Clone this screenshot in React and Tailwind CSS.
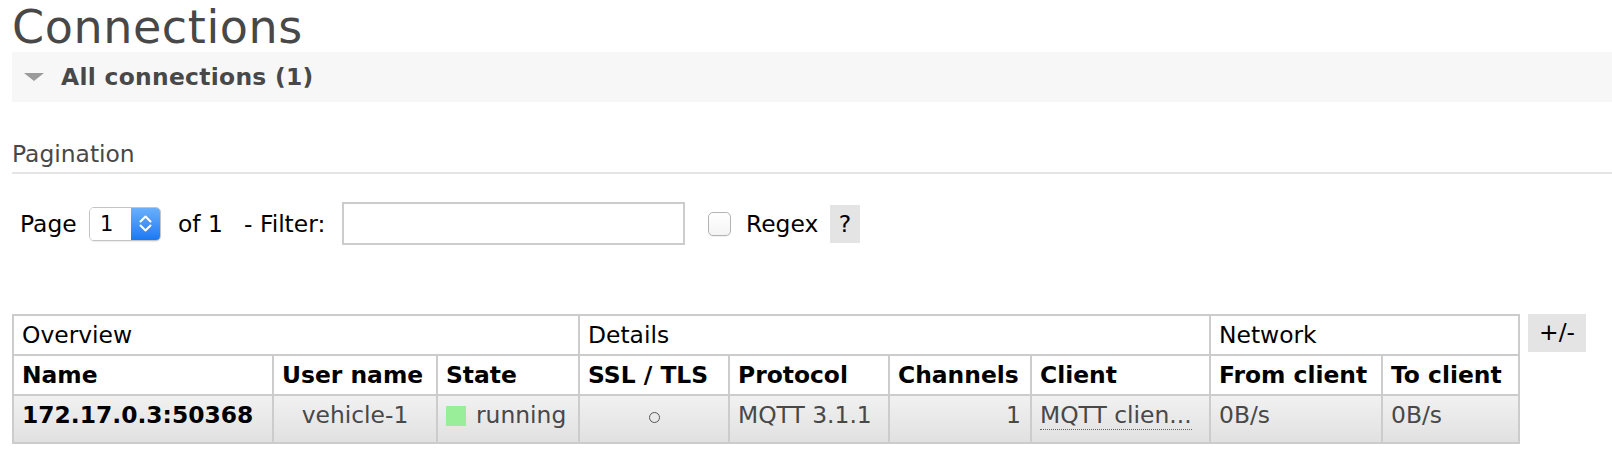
import React from "react";

const font = { fontFamily: '"DejaVu Sans", Verdana, sans-serif' };

function Cell({ children, className = "" }) {
  return (
    <div className={"border-l-2 border-t-2 border-[#cccccc] " + className}>
      {children}
    </div>
  );
}

export default function App() {
  const headCls = "h-[40px] flex items-center pl-[8px] leading-[28px] bg-white";
  const thCls = "h-[40px] flex items-center pl-[8px] leading-[28px] bg-white font-bold text-black whitespace-nowrap";
  const tdCls =
    "h-[48px] pt-[5px] leading-[28px] bg-gradient-to-b from-[#f1f1f1] to-[#e1e1e1] text-[#484848] whitespace-nowrap";

  return (
    <div className="w-[1612px] h-[460px] bg-white pl-[12px] overflow-hidden text-[23.4px]" style={font}>
      <div className="h-[52px]">
        <h1 className="text-[46px] leading-[54px] font-normal text-[#484848] tracking-[0.6px]">Connections</h1>
      </div>

      <div className="h-[50px] bg-[#f7f7f7] flex items-center pl-[12px]">
        <svg width="20" height="8" viewBox="0 0 20 8" className="shrink-0">
          <polygon points="0,0 20,0 10,8" fill="#9b9b9b" />
        </svg>
        <span className="ml-[17px] font-bold text-[#484848] leading-[28px] tracking-[0.3px]">
          All connections (1)
        </span>
      </div>

      <div className="mt-[38px] pb-[4px] border-b-2 border-[#e4e4e4] leading-[28px] text-[#484848]">
        Pagination
      </div>

      <div className="mt-[28px] h-[43px] flex items-center pl-[8px] text-black whitespace-nowrap leading-[28px]">
        <span className="w-[69px] shrink-0">Page</span>
        <div className="w-[72px] h-[34px] shrink-0 flex rounded-[5px] overflow-hidden border border-[#c4c4c4] shadow-[0_1px_1px_rgba(0,0,0,0.08)]">
          <div className="flex-1 bg-white flex items-center pl-[10px] text-[21px]">1</div>
          <div className="w-[29px] h-full bg-gradient-to-b from-[#69b0fb] to-[#1a78f4] flex items-center justify-center">
            <svg width="13" height="17" viewBox="0 0 13 17">
              <polyline points="1.5,6.5 6.5,1.5 11.5,6.5" fill="none" stroke="white" strokeWidth="2" strokeLinecap="round" strokeLinejoin="round" />
              <polyline points="1.5,10.5 6.5,15.5 11.5,10.5" fill="none" stroke="white" strokeWidth="2" strokeLinecap="round" strokeLinejoin="round" />
            </svg>
          </div>
        </div>
        <span className="ml-[17px] w-[66px] shrink-0">of 1</span>
        <span className="w-[98px] shrink-0">- Filter:</span>
        <div className="w-[343px] h-[43px] shrink-0 border-2 border-[#cccccc] bg-white" />
        <div className="ml-[23px] w-[23px] h-[24px] shrink-0 rounded-[5px] border border-[#b3b3b3] bg-gradient-to-b from-white to-[#f4f4f4] shadow-[0_1px_1px_rgba(0,0,0,0.06)]" />
        <span className="ml-[15px] w-[84px] shrink-0">Regex</span>
        <span className="w-[30px] h-[38px] shrink-0 bg-[#e4e4e4] flex items-center justify-center">?</span>
      </div>

      <div className="mt-[69px] flex items-start">
        <div className="w-[1508px] shrink-0 grid grid-cols-[260px_164px_142px_150px_160px_142px_179px_172px_137px] border-r-2 border-b-2 border-[#cccccc] text-black">
          <Cell className={"col-span-3 " + headCls}>Overview</Cell>
          <Cell className={"col-span-4 " + headCls}>Details</Cell>
          <Cell className={"col-span-2 " + headCls}>Network</Cell>

          <Cell className={thCls}>Name</Cell>
          <Cell className={thCls}>User name</Cell>
          <Cell className={thCls}>State</Cell>
          <Cell className={thCls}>SSL / TLS</Cell>
          <Cell className={thCls}>Protocol</Cell>
          <Cell className={thCls}>Channels</Cell>
          <Cell className={thCls}>Client</Cell>
          <Cell className={thCls}>From client</Cell>
          <Cell className={thCls}>To client</Cell>

          <Cell className={tdCls + " pl-[8px]"}>
            <span className="font-bold text-black">172.17.0.3:50368</span>
          </Cell>
          <Cell className={tdCls + " text-center"}>vehicle-1</Cell>
          <Cell className={tdCls + " pl-[8px] flex items-start"}>
            <span className="inline-block w-[20px] h-[20px] bg-[#99ee99] mt-[5px] shrink-0" />
            <span className="ml-[10px]">running</span>
          </Cell>
          <Cell className={tdCls + " flex justify-center items-start"}>
            <span className="inline-block w-[11px] h-[11px] rounded-full border-[1.5px] border-[#555555] mt-[11px]" aria-label="○" />
          </Cell>
          <Cell className={tdCls + " pl-[8px]"}>MQTT 3.1.1</Cell>
          <Cell className={tdCls + " text-right pr-[9px]"}>1</Cell>
          <Cell className={tdCls + " pl-[8px]"}>
            <span className="inline-block leading-[27px] border-b border-dotted border-[#666666]">MQTT clien...</span>
          </Cell>
          <Cell className={tdCls + " pl-[8px]"}>0B/s</Cell>
          <Cell className={tdCls + " pl-[8px]"}>0B/s</Cell>
        </div>
        <div className="ml-[8px] w-[58px] h-[38px] bg-[#e4e4e4] flex items-center justify-center text-black">
          +/-
        </div>
      </div>
    </div>
  );
}
